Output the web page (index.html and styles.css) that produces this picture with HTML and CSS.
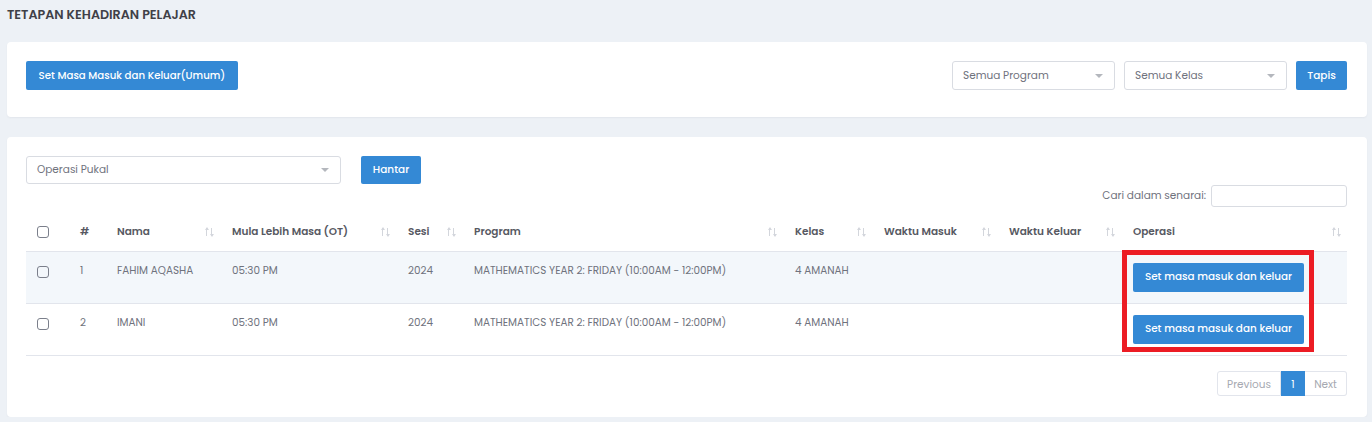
FILE: index.html
```html
<!DOCTYPE html>
<html lang="ms">
<head>
    <meta charset="UTF-8">
    <meta name="viewport" content="width=device-width, initial-scale=1.0">
    <title>Tetapan Kehadiran Pelajar</title>
    <link rel="stylesheet" href="styles.css">
</head>
<body>

    <div class="page">
        <h1 class="page-title">TETAPAN KEHADIRAN PELAJAR</h1>

        <div class="card card-top">
            <button class="btn btn-primary btn-general">Set Masa Masuk dan Keluar(Umum)</button>
            <div class="filters">
                <div class="select select-filter">Semua Program<span class="caret"></span></div>
                <div class="select select-filter">Semua Kelas<span class="caret"></span></div>
                <button class="btn btn-primary btn-filter">Tapis</button>
            </div>
        </div>

        <div class="card card-list">
            <div class="bulk">
                <div class="select select-bulk">Operasi Pukal<span class="caret"></span></div>
                <button class="btn btn-primary btn-send">Hantar</button>
            </div>

            <div class="search">
                <label for="search-input">Cari dalam senarai:</label>
                <input type="text" id="search-input">
            </div>

            <div class="table-wrap">
                <table class="data-table">
                    <colgroup>
                        <col class="col-check">
                        <col class="col-no">
                        <col class="col-name">
                        <col class="col-ot">
                        <col class="col-session">
                        <col class="col-program">
                        <col class="col-class">
                        <col class="col-in">
                        <col class="col-out">
                        <col class="col-action">
                    </colgroup>
                    <thead>
                        <tr>
                            <th class="cell-check"><span class="check"></span></th>
                            <th>#</th>
                            <th class="sortable">Nama<span class="sort"></span></th>
                            <th class="sortable">Mula Lebih Masa (OT)<span class="sort"></span></th>
                            <th class="sortable">Sesi<span class="sort"></span></th>
                            <th class="sortable">Program<span class="sort"></span></th>
                            <th class="sortable">Kelas<span class="sort"></span></th>
                            <th class="sortable">Waktu Masuk<span class="sort"></span></th>
                            <th class="sortable">Waktu Keluar<span class="sort"></span></th>
                            <th class="sortable">Operasi<span class="sort"></span></th>
                        </tr>
                    </thead>
                    <tbody>
                        <tr class="odd">
                            <td class="cell-check"><span class="check"></span></td>
                            <td>1</td>
                            <td>FAHIM AQASHA</td>
                            <td>05:30 PM</td>
                            <td>2024</td>
                            <td>MATHEMATICS YEAR 2: FRIDAY (10:00AM - 12:00PM)</td>
                            <td>4 AMANAH</td>
                            <td></td>
                            <td></td>
                            <td><button class="btn btn-primary btn-row">Set masa masuk dan keluar</button></td>
                        </tr>
                        <tr>
                            <td class="cell-check"><span class="check"></span></td>
                            <td>2</td>
                            <td>IMANI</td>
                            <td>05:30 PM</td>
                            <td>2024</td>
                            <td>MATHEMATICS YEAR 2: FRIDAY (10:00AM - 12:00PM)</td>
                            <td>4 AMANAH</td>
                            <td></td>
                            <td></td>
                            <td><button class="btn btn-primary btn-row">Set masa masuk dan keluar</button></td>
                        </tr>
                    </tbody>
                </table>
                <div class="highlight"></div>
            </div>

            <div class="pager">
                <span class="page-link disabled">Previous</span>
                <span class="page-link active">1</span>
                <span class="page-link disabled">Next</span>
            </div>
        </div>
    </div>

</body>
</html>
```

FILE: styles.css
```css
body {
    margin: 0;
    padding: 0;
    background-color: #edf1f6;
    font-family: "Poppins", "Inter", "Noto Sans", sans-serif;
    color: #6f727d;
}

.page {
    padding: 0 5px 0 7px;
}

.page-title {
    margin: 0 0 12px;
    height: 30px;
    line-height: 30px;
    font-size: 12.7px;
    font-weight: 600;
    color: #3f4047;
}

.card {
    background-color: white;
    border-radius: 4px;
    box-shadow: 0 1px 2px rgba(69, 65, 78, 0.06);
}

.card-top {
    display: flex;
    justify-content: space-between;
    align-items: flex-start;
    padding: 19px 20px 27px 19px;
    margin-bottom: 20px;
}

.btn {
    border: none;
    border-radius: 2px;
    font-family: inherit;
    font-weight: 500;
    cursor: pointer;
    padding: 0;
    white-space: nowrap;
}

.btn-primary {
    background-color: #3489d5;
    color: white;
}

.btn-general {
    width: 212px;
    height: 29px;
    font-size: 10.2px;
}

.filters {
    display: flex;
    gap: 9px;
}

.select {
    position: relative;
    box-sizing: border-box;
    border: 1px solid #d9dce2;
    border-radius: 3px;
    padding-left: 10px;
    font-size: 10.5px;
    color: #6f727d;
    display: flex;
    align-items: center;
}

.select-filter {
    width: 163px;
    height: 29px;
}

.caret {
    position: absolute;
    right: 11px;
    top: 50%;
    margin-top: -2px;
    border-left: 4px solid transparent;
    border-right: 4px solid transparent;
    border-top: 4px solid #b4b7bd;
}

.btn-filter {
    width: 51px;
    height: 29px;
    font-size: 10.5px;
}

.card-list {
    padding: 19px 20px 21px 19px;
}

.bulk {
    display: flex;
    gap: 20px;
}

.select-bulk {
    width: 315px;
    height: 28px;
}

.btn-send {
    width: 60px;
    height: 28px;
    font-size: 10.5px;
}

.search {
    display: flex;
    justify-content: flex-end;
    align-items: center;
    gap: 5px;
    margin-top: 1px;
    font-size: 10.5px;
}

.search input {
    box-sizing: border-box;
    width: 136px;
    height: 22px;
    border: 1px solid #d9dce2;
    border-radius: 3px;
    margin: 0;
}

.table-wrap {
    position: relative;
    margin-top: 4px;
}

.data-table {
    width: 100%;
    table-layout: fixed;
    border-collapse: collapse;
}

.col-check { width: 42px; }
.col-no { width: 37px; }
.col-name { width: 115px; }
.col-ot { width: 176px; }
.col-session { width: 66px; }
.col-program { width: 321px; }
.col-class { width: 89px; }
.col-in { width: 125px; }
.col-out { width: 124px; }
.col-action { width: 226px; }

.data-table th {
    position: relative;
    height: 40px;
    padding: 3px 11px 0 12px;
    box-sizing: border-box;
    text-align: left;
    font-size: 10.5px;
    font-weight: 600;
    color: #575962;
    border-bottom: 1px solid #e2e5ec;
    white-space: nowrap;
}

.data-table th.sortable {
    padding-right: 24px;
}

.data-table .cell-check {
    padding-left: 11px;
}

.sort {
    position: absolute;
    right: 6px;
    top: 16px;
    width: 10px;
    height: 10px;
    background:
        linear-gradient(#d3d6dc, #d3d6dc) 2px 1px / 1px 8px no-repeat,
        linear-gradient(#d3d6dc, #d3d6dc) 7px 1px / 1px 8px no-repeat;
}

.sort::before,
.sort::after {
    content: "";
    position: absolute;
    border-left: 2px solid transparent;
    border-right: 2px solid transparent;
}

.sort::before {
    left: 0.5px;
    top: 0;
    border-bottom: 3px solid #d3d6dc;
}

.sort::after {
    left: 5.5px;
    bottom: 0;
    border-top: 3px solid #d3d6dc;
}

.data-table td {
    height: 52px;
    padding: 11px 10px 0 12px;
    box-sizing: border-box;
    vertical-align: top;
    font-size: 10.4px;
    line-height: 16px;
    border-bottom: 1px solid #e2e5ec;
    white-space: nowrap;
}

.data-table tr.odd td {
    background-color: #f3f7fb;
}

.check {
    display: inline-block;
    box-sizing: border-box;
    width: 12px;
    height: 12px;
    border: 1px solid #7b7f8b;
    border-radius: 3px;
    vertical-align: middle;
}

.data-table td .check {
    margin-top: 3px;
    vertical-align: top;
}

.btn-row {
    width: 171px;
    height: 29px;
    font-size: 10.4px;
}

.highlight {
    position: absolute;
    left: 1096px;
    top: 39px;
    width: 192px;
    height: 102px;
    box-sizing: border-box;
    border: 5px solid #ec1c24;
    pointer-events: none;
}

.pager {
    display: flex;
    justify-content: flex-end;
    margin-top: 15px;
}

.page-link {
    height: 25px;
    line-height: 25px;
    box-sizing: border-box;
    border: 1px solid #e2e5ec;
    font-size: 10.5px;
    text-align: center;
}

.page-link.disabled {
    color: #a6a9b1;
}

.page-link:first-child {
    width: 64px;
    border-radius: 3px 0 0 3px;
}

.page-link.active {
    width: 24px;
    background-color: #3489d5;
    border-color: #3489d5;
    color: white;
}

.page-link:last-child {
    width: 42px;
    border-left: none;
    border-radius: 0 3px 3px 0;
}
```
